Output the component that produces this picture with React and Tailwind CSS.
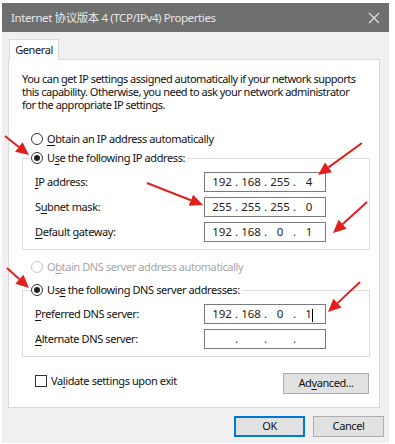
import React from 'react';

const font = { fontFamily: '"Noto Sans", "Noto Sans CJK SC", sans-serif' };

const U = ({ children }) => <span className="underline underline-offset-2">{children}</span>;

const Radio = ({ checked, disabled }) => (
  <span
    className={`w-[12px] h-[12px] rounded-full border flex items-center justify-center shrink-0 bg-white ${
      disabled ? 'border-[#c4c4c4]' : 'border-[#333]'
    }`}
  >
    {checked && <span className="w-[6px] h-[6px] rounded-full bg-[#222]" />}
  </span>
);

const IpBox = ({ parts, caret }) => (
  <div className="w-[122px] h-[20px] border border-[#7a7a7a] bg-white flex items-center pl-[4px] text-[11.5px] tracking-normal text-[#222]">
    {parts.map((p, i) => (
      <React.Fragment key={i}>
        <span className="w-[26px] text-center">
          {p}
          {caret && i === 3 && <span className="inline-block w-px h-[13px] bg-black align-middle" />}
        </span>
        {i < 3 && <span className="w-[3px] text-center">.</span>}
      </React.Fragment>
    ))}
  </div>
);

const Row = ({ label, parts, caret }) => (
  <div className="flex items-center h-[20px]">
    <div className="w-[169px]">{label}</div>
    <IpBox parts={parts} caret={caret} />
  </div>
);

const arrows = [
  [5, 136, 29, 155],
  [362, 143, 318, 175],
  [147, 183, 203, 205],
  [367, 202, 333, 233],
  [7, 268, 29, 288],
  [360, 282, 328, 312],
];

const Arrow = ({ x1, y1, x2, y2 }) => {
  const a = Math.atan2(y2 - y1, x2 - x1);
  const len = 13;
  const w = 6;
  const bx = x2 - len * Math.cos(a);
  const by = y2 - len * Math.sin(a);
  const px = -Math.sin(a) * w;
  const py = Math.cos(a) * w;
  return (
    <g>
      <line x1={x1} y1={y1} x2={bx} y2={by} stroke="#e0201c" strokeWidth="2" />
      <polygon points={`${x2},${y2} ${bx + px},${by + py} ${bx - px},${by - py}`} fill="#e0201c" />
    </g>
  );
};

export default function App() {
  return (
    <div className="w-[395px] h-[444px] bg-white relative overflow-hidden text-[#111] text-[11px] tracking-[-0.4px]" style={font}>
      <div className="ml-[2px] mt-[3px] w-[387px] h-[440px] bg-[#f0f0f0] flex flex-col">
        <div className="h-[29px] bg-[#6f6f6f] flex items-center justify-between pl-[9px] pr-[9px] shrink-0">
          <span className="text-[#e8e8e8] text-[11.5px]">Internet 协议版本 4 (TCP/IPv4) Properties</span>
          <svg width="12" height="12" viewBox="0 0 12 12">
            <path d="M1 1 L11 11 M11 1 L1 11" stroke="#e0e0e0" strokeWidth="1.2" />
          </svg>
        </div>

        <div className="pl-[6px] pt-[7px]">
          <div className="ml-[1px] w-[50px] h-[21px] bg-white border border-b-0 border-[#d9d9d9] flex items-center justify-center relative z-10 -mb-px">
            General
          </div>
          <div className="w-[372px] h-[349px] bg-white border border-[#d9d9d9] pl-[13px] pr-[9px] pt-[12px]">
            <div className="flex flex-col tracking-[-0.5px] whitespace-nowrap">
              <span className="h-[13px] leading-[13px]">You can get IP settings assigned automatically if your network supports</span>
              <span className="h-[13px] leading-[13px]">this capability. Otherwise, you need to ask your network administrator</span>
              <span className="h-[13px] leading-[13px]">for the appropriate IP settings.</span>
            </div>

            <div className="mt-[20px] ml-[9px] flex items-center gap-[4px] h-[16px]">
              <Radio />
              <span><U>O</U>btain an IP address automatically</span>
            </div>

            <fieldset className="mt-[3px] border border-[#dcdcdc] w-[348px] pl-[12px] pb-[7px]">
              <legend className="ml-[-4px] pr-[2px] h-[16px]">
                <span className="flex items-center gap-[4px] h-[16px]">
                  <Radio checked />
                  <span>U<U>s</U>e the following IP address:</span>
                </span>
              </legend>
              <div className="flex flex-col gap-[5px] mt-[6px]">
                <Row label={<><U>I</U>P address:</>} parts={['192', '168', '255', '4']} />
                <Row label={<>S<U>u</U>bnet mask:</>} parts={['255', '255', '255', '0']} />
                <Row label={<><U>D</U>efault gateway:</>} parts={['192', '168', '0', '1']} />
              </div>
            </fieldset>

            <div className="mt-[9px] ml-[9px] flex items-center gap-[4px] h-[16px] text-[#a6a6a6]">
              <Radio disabled />
              <span>O<U>b</U>tain DNS server address automatically</span>
            </div>

            <fieldset className="mt-[7px] border border-[#dcdcdc] w-[348px] pl-[12px] pb-[7px]">
              <legend className="ml-[-4px] pr-[2px] h-[16px]">
                <span className="flex items-center gap-[4px] h-[16px]">
                  <Radio checked />
                  <span>Us<U>e</U> the following DNS server addresses:</span>
                </span>
              </legend>
              <div className="flex flex-col gap-[5px] mt-[6px]">
                <Row label={<><U>P</U>referred DNS server:</>} parts={['192', '168', '0', '1']} caret />
                <Row label={<><U>A</U>lternate DNS server:</>} parts={['', '', '', '']} />
              </div>
            </fieldset>

            <div className="mt-[16px] flex items-start justify-between pr-[1px]">
              <div className="ml-[13px] h-[16px] flex items-center gap-[4px]">
                <span className="w-[12px] h-[12px] border border-[#333] bg-white" />
                <span>Va<U>l</U>idate settings upon exit</span>
              </div>
              <button className="w-[86px] h-[21px] bg-[#e1e1e1] border border-[#adadad] flex items-center justify-center">
                Ad<U>v</U>anced...
              </button>
            </div>
          </div>
        </div>

        <div className="flex justify-end gap-[8px] pr-[5px] mt-[8px]">
          <button className="w-[71px] h-[21px] bg-[#e1e1e1] border-2 border-[#0078d7] flex items-center justify-center">
            OK
          </button>
          <button className="w-[71px] h-[21px] bg-[#e1e1e1] border border-[#adadad] flex items-center justify-center">
            Cancel
          </button>
        </div>
      </div>

      <svg className="absolute inset-0 pointer-events-none" width="395" height="444">
        {arrows.map(([x1, y1, x2, y2], i) => (
          <Arrow key={i} x1={x1} y1={y1} x2={x2} y2={y2} />
        ))}
      </svg>
    </div>
  );
}
